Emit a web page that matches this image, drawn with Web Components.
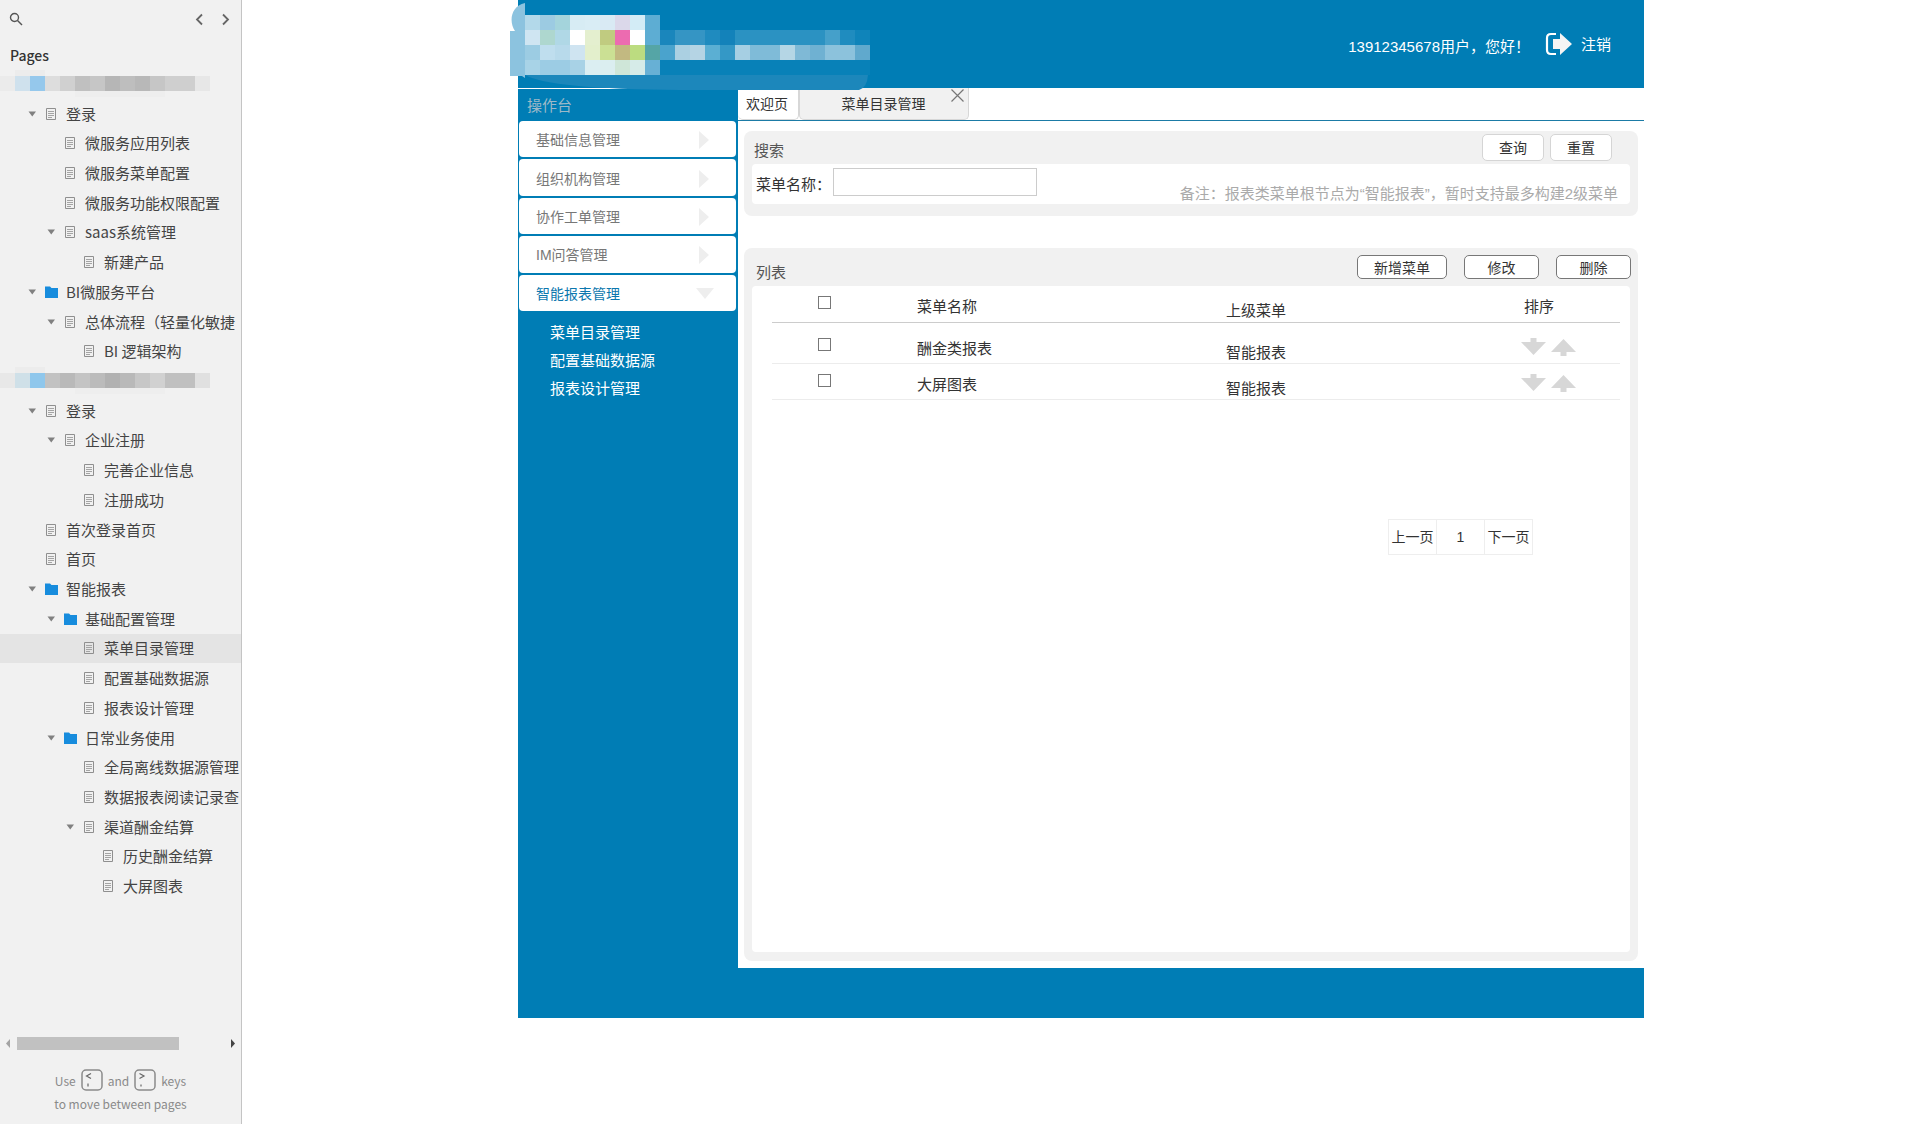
<!DOCTYPE html>
<html lang="zh-CN">
<head>
<meta charset="utf-8">
<title>菜单目录管理</title>
<style>
  html, body { height: 100%; }
  body {
    margin: 0; background: #fff; color: #333;
    font: 15px/20px "Liberation Sans", "Noto Sans CJK SC", sans-serif;
    --blue: #007db5; --grey: #f1f1f1;
  }
</style>
</head>
<body>
<proto-page></proto-page>
<script>
const define = (name, html, setup) => {
  const template = document.createElement('template');
  template.innerHTML = html;
  customElements.define(name, class extends HTMLElement {
    connectedCallback() {
      if (this.shadowRoot) return;
      const root = this.attachShadow({ mode: 'open' });
      root.append(template.content.cloneNode(true));
      if (setup) setup(this, root);
    }
  });
};

/* Row of coloured squares that masks a project name */
define('mosaic-strip', `
<style>:host{display:flex;align-items:center;overflow:hidden} svg{display:block}</style>
<svg width="210" height="27" viewBox="0 0 210 27" aria-hidden="true" shape-rendering="crispEdges"></svg>`,
(host, root) => {
  const colors = host.getAttribute('colors').split(' ');
  root.querySelector('svg').innerHTML =
    '<rect x="15" y="0" width="30" height="6" fill="#ececec"/><rect x="75" y="21" width="90" height="6" fill="#eeeeee"/>' +
    colors.map((c, i) => `<rect x="${i * 15}" y="6" width="15" height="15" fill="#${c}"/>`).join('');
});

/* One line of the page tree: level, kind (page or folder), open, selected */
define('tree-item', `
<style>
  :host{display:flex;align-items:center;min-width:0;overflow:hidden;white-space:nowrap}
  :host([selected]){background:#e4e4e4}
  :host([level="1"]){padding-left:28px}
  :host([level="2"]){padding-left:47px}
  :host([level="3"]){padding-left:66px}
  :host([level="4"]){padding-left:85px}
  .caret{flex:none;width:17px;height:12px}
  .icon{flex:none;width:14px;height:14px;margin-right:7px}
  a{color:inherit;text-decoration:none}
  .folder,:host([kind="folder"]) .page,:host(:not([open])) .caret path{display:none}
  :host([kind="folder"]) .folder{display:block}
</style>
<svg class="caret" viewBox="0 0 17 12" aria-hidden="true"><path d="M.5 3.500h7.500L4.250 8.500z" fill="#808080"/></svg>
<svg class="icon page" viewBox="0 0 14 14" fill="none" aria-hidden="true"><path d="M1.500 1.500h9v11h-9z" stroke="#8f8f8f"/><path d="M3 4.500h6M3 6.500h6M3 8.500h6M3 10.500h4" stroke="#a4a4a4"/></svg>
<svg class="icon folder" viewBox="0 0 14 14" aria-hidden="true"><path d="M0 1.500h5l1.500 1.500H13v10H0z" fill="#178cdd"/></svg>
<a href="#"><slot></slot></a>`);

define('proto-sidebar', `
<style>
  :host{display:flex;flex-direction:column;box-sizing:border-box;width:242px;flex:none;background:var(--grey);border-right:1px solid #c4c4c4;
    overflow:hidden;color:#444;font-family:"Noto Sans CJK SC",sans-serif}
  .tools{display:flex;align-items:center;padding:8px 8px 0 9px;height:22px}
  .tools button{padding:0;border:0;background:none;height:16px}
  .find{margin-right:auto}
  .step{margin-left:10px}
  svg{display:block}
  h2{margin:14px 0 3px 10px;font-size:14px;line-height:22px;font-weight:500;color:#333}
  nav{display:grid;grid-auto-rows:1fr;height:832px;flex:none}
  .scroll{display:flex;align-items:center;margin-top:auto;padding:0 5px;gap:7px;height:13px}
  .thumb{width:162px;height:13px;background:#c1c1c1;margin-right:auto}
  footer{padding:19px 0 9px;text-align:center;font-size:12px;line-height:23px;color:#8a8a8a}
  p{display:flex;justify-content:center;align-items:center;gap:5px;margin:0}
  kbd{display:flex}
</style>
<div class="tools">
  <button class="find" aria-label="Search"><svg width="15" height="15" viewBox="0 0 15 15" fill="none" stroke="#555" stroke-width="1.400"><circle cx="5.500" cy="5.500" r="4"/><path d="M8.500 8.500l4.500 4.500"/></svg></button>
  <button class="step" aria-label="Previous"><svg width="16" height="15" viewBox="0 0 16 15" fill="none" stroke="#666" stroke-width="1.800"><path d="M11 2.500L6 7.500l5 5"/></svg></button>
  <button class="step" aria-label="Next"><svg width="16" height="15" viewBox="0 0 16 15" fill="none" stroke="#666" stroke-width="1.800"><path d="M6 2.500l5 5-5 5"/></svg></button>
</div>
<h2>Pages</h2>
<nav aria-label="Pages">
  <mosaic-strip colors="ebebeb cfe1ed 95c8ec dddddd d0d0d0 c0c0c0 c6c6c6 b6b6b6 bebebe b8b8b8 c6c6c6 cfcfcf cfcfcf e7e7e7"></mosaic-strip>
  <tree-item level="1" open>登录</tree-item>
  <tree-item level="2">微服务应用列表</tree-item>
  <tree-item level="2">微服务菜单配置</tree-item>
  <tree-item level="2">微服务功能权限配置</tree-item>
  <tree-item level="2" open>saas系统管理</tree-item>
  <tree-item level="3">新建产品</tree-item>
  <tree-item level="1" kind="folder" open>BI微服务平台</tree-item>
  <tree-item level="2" open>总体流程（轻量化敏捷</tree-item>
  <tree-item level="3">BI 逻辑架构</tree-item>
  <mosaic-strip colors="e8e8e8 cfe0e8 8fc7ec c2c2c2 b9b9b9 c4c4c4 bbbbbb b1b1b1 b9b9b9 c7c7c7 d1d1d1 c0c0c0 c0c0c0 e0e0e0"></mosaic-strip>
  <tree-item level="1" open>登录</tree-item>
  <tree-item level="2" open>企业注册</tree-item>
  <tree-item level="3">完善企业信息</tree-item>
  <tree-item level="3">注册成功</tree-item>
  <tree-item level="1">首次登录首页</tree-item>
  <tree-item level="1">首页</tree-item>
  <tree-item level="1" kind="folder" open>智能报表</tree-item>
  <tree-item level="2" kind="folder" open>基础配置管理</tree-item>
  <tree-item level="3" selected>菜单目录管理</tree-item>
  <tree-item level="3">配置基础数据源</tree-item>
  <tree-item level="3">报表设计管理</tree-item>
  <tree-item level="2" kind="folder" open>日常业务使用</tree-item>
  <tree-item level="3">全局离线数据源管理</tree-item>
  <tree-item level="3">数据报表阅读记录查</tree-item>
  <tree-item level="3" open>渠道酬金结算</tree-item>
  <tree-item level="4">历史酬金结算</tree-item>
  <tree-item level="4">大屏图表</tree-item>
</nav>
<div class="scroll" aria-hidden="true">
  <svg width="5" height="9" viewBox="0 0 5 9"><path d="M5 0v9L1 4.500z" fill="#a3a3a3"/></svg>
  <div class="thumb"></div>
  <svg width="5" height="9" viewBox="0 0 5 9"><path d="M0 0v9l4-4.500z" fill="#444"/></svg>
</div>
<footer>
  <p>Use
    <kbd aria-label="comma"><svg width="22" height="23" viewBox="0 0 22 23" fill="none" stroke="#8a8a8a"><rect x="1" y="1" width="20" height="20" rx="4" stroke-width="1.500"/><path d="M10 4.500L5.500 7l4.500 2.500M7 14.500v3" stroke="#666" stroke-width="1.200"/></svg></kbd>
    and
    <kbd aria-label="period"><svg width="22" height="23" viewBox="0 0 22 23" fill="none" stroke="#8a8a8a"><rect x="1" y="1" width="20" height="20" rx="4" stroke-width="1.500"/><path d="M5.500 4.500L10 7l-4.500 2.500M7 15.500v2" stroke="#666" stroke-width="1.200"/></svg></kbd>
    keys</p>
  <p>to move between pages</p>
</footer>`);

/* Pixelated logo; it spills a little over the header's left edge */
define('brand-mosaic', `
<style>:host{display:block;position:absolute;left:-8px;top:3px} svg{display:block}</style>
<svg width="362" height="87" viewBox="0 0 362 87" aria-hidden="true">
  <path d="M15 0v75l-3-2H0V28h5C-1 20 0 3 15 0z" fill="#8cc3df"/>
  <path d="M15 72h343q-1 13-9 15H170Q40 86 15 72z" fill="#1c87bb"/>
  <g shape-rendering="crispEdges"></g>
</svg>`,
(host, root) => {
  const rows = [
    'b3d9ea 9ccbe2 a4d4dc d7ecf4 d9edf5 d9eaf4 dbd8ea d3ecf6 5dadd3',
    'cfe5f2 aed7cf b0d8e6 ffffff e4efcf c0cb80 ec6bb0 ffffff 5dadd3 1a86bc 3595c4 3595c4 1f8bbf 1382ba 2b92c2 2b92c2 2b92c2 2b92c2 2b92c2 2b92c2 45a0ca 1f8cbf 0f84ba',
    '9ccce3 bfdeee b8daeb cfe4f1 e3efcc cbe094 c2b981 bcdc80 55a5a6 4aa3cd abd0e2 b5d4e4 5bafd3 3498c6 a6cfe3 7fbbd8 7fbbd8 b5d6e5 7fb9d6 6fb1d2 8cc2dc 8cc2dc 60a9cd',
    'a8d3e7 9ccce4 9ccce4 a8d2e6 dbeef2 dbeef0 cfe6d8 d6ebe8 67b0d5 0881b8 0881b8 0881b8 0881b8 0881b8 0881b8 0881b8 0881b8 0881b8 0881b8 0881b8 0881b8 0881b8 0881b8'
  ];
  root.querySelector('g').innerHTML = rows.map((row, y) => row.split(' ').map((c, x) =>
    `<rect x="${15 + x * 15}" y="${12 + y * 15}" width="15" height="15" fill="#${c}"/>`).join('')).join('');
});

define('app-header', `
<style>
  :host{display:flex;position:relative;justify-content:flex-end;align-items:center;box-sizing:border-box;height:88px;padding:0 33px 0 0;background:var(--blue);color:#fff}
  .user{margin-top:6px}
  button{display:flex;align-items:center;gap:9px;margin:2px 0 0 15px;padding:0;border:0;background:none;color:inherit;font:inherit}
  svg{margin-bottom:2px}
</style>
<brand-mosaic></brand-mosaic>
<span class="user">13912345678用户，您好！</span>
<button><svg width="27" height="24" viewBox="0 0 27 24" aria-hidden="true"><path d="M11 2H6Q2 2 2 6v12q0 4 4 4h5" fill="none" stroke="#fff" stroke-width="2.200"/><path d="M8 7h7V1l12 11-12 11v-6H8z" fill="#f4f4f4"/></svg>注销</button>`);

define('nav-card', `
<style>
  :host{display:flex}
  button{display:flex;flex:1;align-items:center;justify-content:space-between;padding:2px 22px 0 17px;border:0;border-radius:4px;background:#fff;color:#777;font:inherit;font-size:14px}
  :host([open]) button{color:#0b77ae}
  .down,:host([open]) .right{display:none}
  :host([open]) .down{display:block}
  .right{margin-right:5px}
</style>
<button><slot></slot>
<svg class="right" width="10" height="20" viewBox="0 0 10 20" aria-hidden="true"><path d="M0 1l10 9-10 9z" fill="#eee"/></svg>
<svg class="down" width="18" height="12" viewBox="0 0 18 12" aria-hidden="true"><path d="M0 0h18L9 11z" fill="#eee"/></svg></button>`);

define('side-nav', `
<style>
  :host{display:block;width:220px;flex:none;box-sizing:border-box;background:var(--blue);padding:0 2px 0 1px}
  h2{margin:0 -2px 0 -1px;padding:0 9px 5px;font-size:15px;line-height:20px;font-weight:400;color:#9db9c8}
  h2::before{content:"";display:block;width:140px;height:1px;background:#fff;margin:0 0 7px -9px}
  .cards{display:grid;grid-auto-rows:1fr;gap:2px;height:190px}
  ul{list-style:none;margin:0;padding:8px 0 0 31px}
  li{line-height:28px}
  a{color:#fff;text-decoration:none}
</style>
<h2>操作台</h2>
<div class="cards">
  <nav-card>基础信息管理</nav-card>
  <nav-card>组织机构管理</nav-card>
  <nav-card>协作工单管理</nav-card>
  <nav-card>IM问答管理</nav-card>
  <nav-card open>智能报表管理</nav-card>
</div>
<ul>
  <li><a href="#">菜单目录管理</a></li>
  <li><a href="#">配置基础数据源</a></li>
  <li><a href="#">报表设计管理</a></li>
</ul>`);

define('tab-bar', `
<style>
  :host{display:flex;height:32px;border-bottom:1px solid #1b7ba6;font-size:14px}
  .tab{display:flex;box-sizing:border-box;height:32px;border:1px solid #d7d7d7;border-width:0 1px 1px 0;border-radius:0 0 5px 5px}
  .tab.on{width:170px;background:var(--grey);border-left-width:1px}
  button{padding:0;border:0;background:none;color:#333;font:inherit}
  .tab .name{padding:0 10px 0 8px}
  .tab.on .name{flex:1;padding:0 0 0 20px}
  .close{align-self:flex-start;padding:1px 4px}
  svg{display:block}
</style>
<div class="tab"><button class="name">欢迎页</button></div>
<div class="tab on"><button class="name">菜单目录管理</button><button class="close" aria-label="关闭"><svg width="13" height="13" viewBox="0 0 13 13" stroke="#777" stroke-width="1.200"><path d="M.5.5l12 12M12.500.5l-12 12"/></svg></button></div>`);

define('panel-card', `
<style>
  :host{display:block;background:var(--grey);border-radius:8px;padding:0 8px 9px 8px}
  header{display:flex;align-items:center}
  h2{margin:0 auto 0 0;font-size:15px;line-height:20px;font-weight:400;color:#555}
  .body{background:#fff;border-radius:4px}
  :host([kind="search"]){padding-bottom:12px}
  :host([kind="search"]) header{height:33px;gap:6px;padding:0 18px 0 2px}
  :host([kind="search"]) h2{padding-top:6px}
  :host([kind="list"]) header{height:38px;gap:17px;padding:0 0 0 4px;margin-right:-1px}
  :host([kind="list"]) h2{padding-top:12px}
  :host([kind="list"]) .body{min-height:666px}
</style>
<header><h2></h2><slot name="actions"></slot></header>
<div class="body"><slot></slot></div>`,
(host, root) => { root.querySelector('h2').textContent = host.getAttribute('heading'); });

define('push-button', `
<style>
  :host{display:block}
  button{box-sizing:border-box;width:62px;height:27px;padding:0;border:1px solid #d5d5d5;border-radius:5px;background:#fff;color:#333;font:inherit;font-size:14px;line-height:20px;display:block}
  :host([size="m"]) button,:host([size="l"]) button{height:24px;padding-top:1px;border-color:#777;width:75px}
  :host([size="l"]) button{width:90px}
</style>
<button><slot></slot></button>`);

define('search-form', `
<style>
  :host{display:flex;height:40px;padding:0 12px 0 4px;white-space:nowrap}
  label{margin-top:11px}
  input{box-sizing:border-box;width:204px;height:28px;margin:4px auto 0 2px;padding:0 6px;border:1px solid #ccc;background:#fff;font:inherit}
  p{margin:20px 0 0;color:#aaa}
</style>
<label for="name">菜单名称：</label><input id="name" type="text">
<p>备注：报表类菜单根节点为“智能报表”，暂时支持最多构建2级菜单</p>`);

define('sort-arrows', `
<style>:host{display:flex;gap:5px} button{padding:0;border:0;background:none} svg{display:block}</style>
<button aria-label="下移"><svg width="25" height="18" viewBox="0 0 25 18"><path d="M9.500 0h6v4H25L12.500 17 0 4h9.500z" fill="#d7d7d7"/></svg></button>
<button aria-label="上移"><svg width="25" height="18" viewBox="0 0 25 18"><path d="M12.500 1L25 14h-9.500v4h-6v-4H0z" fill="#d7d7d7"/></svg></button>`);

define('menu-table', `
<style>
  :host{display:block;padding:0 10px 0 20px}
  table{width:100%;border-collapse:separate;border-spacing:0;table-layout:fixed}
  th,td{padding:0;text-align:left;font-weight:400;vertical-align:top;border-bottom:1px solid #ececec}
  th{border-color:#ccc;height:36px}
  .first td{height:40px}
  .last td{height:33px}
  .pick{width:145px}.name{width:309px}.parent{width:295px}
  span,input{display:block}
  input{appearance:none;box-sizing:border-box;width:13px;height:13px;margin:10px 0 0 46px;border:1px solid #777;background:#fff}
  span{margin-top:11px}
  .parent span{margin-top:15px}
  .sort span{margin-left:3px}
  sort-arrows{margin-top:10px}
  .first input,.first sort-arrows{margin-top:15px}
  .first span{margin-top:16px}
  .first .parent span{margin-top:20px}
</style>
<table>
  <thead><tr>
    <th class="pick"><input type="checkbox" aria-label="全选"></th>
    <th class="name"><span>菜单名称</span></th>
    <th class="parent"><span>上级菜单</span></th>
    <th class="sort"><span>排序</span></th>
  </tr></thead>
  <tbody>
    <tr class="first"><td><input type="checkbox" aria-label="酬金类报表"></td><td><span>酬金类报表</span></td><td class="parent"><span>智能报表</span></td><td><sort-arrows></sort-arrows></td></tr>
    <tr class="last"><td><input type="checkbox" aria-label="大屏图表"></td><td><span>大屏图表</span></td><td class="parent"><span>智能报表</span></td><td><sort-arrows></sort-arrows></td></tr>
  </tbody>
</table>`);

define('page-pager', `
<style>
  :host{display:flex;justify-content:flex-end;padding:119px 97px 0 0}
  button{box-sizing:border-box;width:49px;height:36px;margin-left:-1px;padding:0;border:1px solid #eee;background:#fff;color:#333;font:inherit;font-size:14px;white-space:nowrap}
</style>
<button>上一页</button><button>1</button><button>下一页</button>`);

define('proto-page', `
<style>
  :host{display:flex;min-height:100vh}
  main{flex:1;min-width:0}
  .app{max-width:1126px;margin:0 auto;background:var(--blue)}
  .middle{display:flex}
  .content{flex:1;min-width:0;background:#fff;padding-bottom:7px}
  panel-card{margin:10px 6px 32px 6px}
  panel-card[kind="list"]{margin-bottom:0}
  .foot{height:50px}
</style>
<proto-sidebar></proto-sidebar>
<main>
  <div class="app">
    <app-header></app-header>
    <div class="middle">
      <side-nav></side-nav>
      <div class="content">
        <tab-bar></tab-bar>
        <panel-card kind="search" heading="搜索">
          <push-button slot="actions">查询</push-button>
          <push-button slot="actions">重置</push-button>
          <search-form></search-form>
        </panel-card>
        <panel-card kind="list" heading="列表">
          <push-button slot="actions" size="l">新增菜单</push-button>
          <push-button slot="actions" size="m">修改</push-button>
          <push-button slot="actions" size="m">删除</push-button>
          <menu-table></menu-table>
          <page-pager></page-pager>
        </panel-card>
      </div>
    </div>
    <div class="foot"></div>
  </div>
</main>`);
</script>
</body>
</html>
